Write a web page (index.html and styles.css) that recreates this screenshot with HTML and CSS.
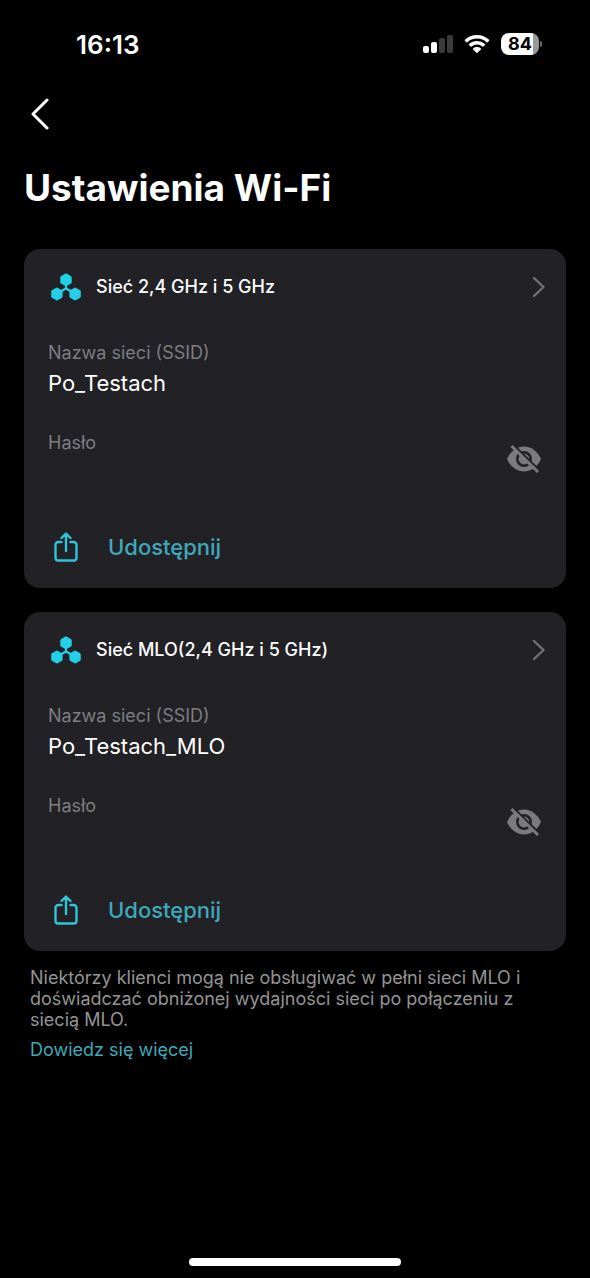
FILE: index.html
```html
<!DOCTYPE html>
<html lang="pl">
<head>
<meta charset="utf-8">
<meta name="viewport" content="width=device-width, initial-scale=1">
<title>Ustawienia Wi-Fi</title>
<link rel="stylesheet" href="styles.css">
</head>
<body>
<svg class="sprite" aria-hidden="true">
  <symbol id="mesh" viewBox="0 0 30 28">
    <path d="M15 7v9M15 15.500L6 20.500M15 15.500l9 5" fill="none" stroke="currentColor" stroke-width="2.200"/>
    <path d="M15 1.600l4.500 2.600v5.200L15 12l-4.500-2.600V4.200zM5.900 15.800l4.500 2.600v5.200l-4.500 2.600-4.500-2.600v-5.200zM24.100 15.800l4.500 2.600v5.200l-4.500 2.600-4.500-2.600v-5.200z" fill="currentColor" stroke="currentColor" stroke-width="2.400" stroke-linejoin="round"/>
  </symbol>
  <symbol id="chevron" viewBox="0 0 14 22">
    <path d="M2 2l9.500 9L2 20" fill="none" stroke="currentColor" stroke-width="2.400" stroke-linecap="round" stroke-linejoin="round"/>
  </symbol>
  <symbol id="eye-off" viewBox="0 0 36 30">
    <path d="M1 15C4 8 10.500 2.500 18 2.500S32 8 35 15c-3 7-9.500 12.500-17 12.500S4 22 1 15z" fill="currentColor"/>
    <circle cx="18" cy="15" r="6.700" fill="none" stroke="#222126" stroke-width="2.600"/>
    <path d="M7.500 1l27 26.500" stroke="#222126" stroke-width="2.400"/>
    <path d="M5.500 2l26.500 26" stroke="currentColor" stroke-width="3"/>
  </symbol>
  <symbol id="share" viewBox="0 0 24 30">
    <path d="M7.500 10H4.200a2.700 2.700 0 0 0-2.700 2.700v13.100a2.700 2.700 0 0 0 2.700 2.700h15.600a2.700 2.700 0 0 0 2.700-2.700V12.700a2.700 2.700 0 0 0-2.700-2.700h-3.300M12 19V2M7.500 6L12 1.500 16.500 6" fill="none" stroke="currentColor" stroke-width="2.400" stroke-linecap="round" stroke-linejoin="round"/>
  </symbol>
</svg>
<div class="screen">
  <div class="status">
    <time class="clock">16:13</time>
    <div class="indicators">
      <svg class="signal" viewBox="0 0 30 20" aria-label="Zasięg">
        <rect x="0" y="12" width="6" height="7" rx="2" fill="#fff"/>
        <rect x="8" y="8" width="6" height="11" rx="2" fill="#fff"/>
        <rect x="16" y="4" width="6" height="15" rx="2" fill="#3b3b3d"/>
        <rect x="24" y="1" width="6" height="18" rx="2" fill="#3b3b3d"/>
      </svg>
      <svg class="wifi" viewBox="0 0 26 20" aria-label="Wi-Fi">
        <path d="M13 1C8.300 1 4 2.800.9 5.700a.7.700 0 0 0 0 1l1.500 1.500a.7.700 0 0 0 1 0A14 14 0 0 1 13 4.500a14 14 0 0 1 9.600 3.700.7.700 0 0 0 1 0l1.500-1.500a.7.700 0 0 0 0-1A17.700 17.700 0 0 0 13 1z" fill="#fff"/>
        <path d="M13 7c-3 0-5.900 1.200-8 3.100a.7.700 0 0 0 0 1l1.600 1.500a.7.700 0 0 0 1 0A8 8 0 0 1 13 10.500a8 8 0 0 1 5.400 2.100.7.700 0 0 0 1 0l1.600-1.500a.7.700 0 0 0 0-1A12 12 0 0 0 13 7z" fill="#fff"/>
        <path d="M13 13c-1.500 0-2.800.5-3.900 1.400a.7.700 0 0 0 0 1l3.400 3.300a.7.700 0 0 0 1 0l3.400-3.300a.7.700 0 0 0 0-1A6 6 0 0 0 13 13z" fill="#fff"/>
      </svg>
      <div class="battery"><span class="level">84</span></div>
    </div>
  </div>
  <nav class="nav">
    <button class="back" type="button" aria-label="Wstecz">
      <svg viewBox="0 0 20 32"><path d="M17 2L3 16l14 14" fill="none" stroke="#fff" stroke-width="3" stroke-linecap="round" stroke-linejoin="round"/></svg>
    </button>
  </nav>
  <main class="content">
    <h1 class="title">Ustawienia Wi-Fi</h1>
    <section class="card">
      <button class="card-head" type="button">
        <svg class="mesh"><use href="#mesh"/></svg>
        <span class="card-name">Sieć 2,4 GHz i 5 GHz</span>
        <svg class="chevron"><use href="#chevron"/></svg>
      </button>
      <div class="field">
        <span class="label">Nazwa sieci (SSID)</span>
        <span class="value">Po_Testach</span>
      </div>
      <div class="secret">
        <span class="label">Hasło</span>
        <button class="reveal" type="button" aria-label="Pokaż hasło"><svg><use href="#eye-off"/></svg></button>
      </div>
      <button class="share" type="button"><svg><use href="#share"/></svg><span>Udostępnij</span></button>
    </section>
    <section class="card">
      <button class="card-head" type="button">
        <svg class="mesh"><use href="#mesh"/></svg>
        <span class="card-name">Sieć MLO(2,4 GHz i 5 GHz)</span>
        <svg class="chevron"><use href="#chevron"/></svg>
      </button>
      <div class="field">
        <span class="label">Nazwa sieci (SSID)</span>
        <span class="value">Po_Testach_MLO</span>
      </div>
      <div class="secret">
        <span class="label">Hasło</span>
        <button class="reveal" type="button" aria-label="Pokaż hasło"><svg><use href="#eye-off"/></svg></button>
      </div>
      <button class="share" type="button"><svg><use href="#share"/></svg><span>Udostępnij</span></button>
    </section>
    <div class="note">
      <p class="note-text">Niektórzy klienci mogą nie obsługiwać w pełni sieci MLO i doświadczać obniżonej wydajności sieci po połączeniu z siecią MLO.</p>
      <a class="more" href="#">Dowiedz się więcej</a>
    </div>
  </main>
  <div class="home-bar"></div>
</div>
</body>
</html>
```
FILE: styles.css
```css
* {
  box-sizing: border-box;
}

body {
  margin: 0;
  background: #000;
  color: #fff;
  font-family: Inter, "Liberation Sans", sans-serif;
}

button {
  padding: 0;
  border: 0;
  background: none;
  color: inherit;
  font: inherit;
  text-align: left;
  cursor: pointer;
}

svg {
  display: block;
  flex: none;
}

.sprite {
  position: absolute;
  width: 0;
  height: 0;
}

.screen {
  display: flex;
  flex-direction: column;
  min-height: 100vh;
}

.status {
  display: flex;
  align-items: center;
  justify-content: space-between;
  height: 88px;
  padding: 0 48px 0 76px;
}

.clock {
  font-size: 26px;
  font-weight: 600;
}

.indicators {
  display: flex;
  align-items: center;
  gap: 11px;
}

.signal {
  width: 30px;
  height: 20px;
}

.wifi {
  width: 26px;
  height: 20px;
}

.battery {
  display: flex;
  align-items: center;
  gap: 1px;
}

.battery::after {
  content: "";
  width: 2px;
  height: 6px;
  border-radius: 0 4px 4px 0;
  background: #6d6d70;
}

.level {
  width: 38px;
  border-radius: 8px;
  background: linear-gradient(to right, #fff 84%, #98989b 84%);
  color: #000;
  font-size: 18px;
  font-weight: 700;
  line-height: 22px;
  text-align: center;
}

.nav {
  padding: 0 24px;
}

.back {
  display: flex;
  align-items: center;
  width: 48px;
  height: 52px;
  padding-left: 6px;
}

.back svg {
  width: 20px;
  height: 32px;
}

.content {
  display: flex;
  flex-direction: column;
  gap: 24px;
  padding: 24px;
}

.title {
  margin: 0 0 13px;
  font-size: 37px;
  font-weight: 700;
  line-height: 48px;
}

.card {
  display: flex;
  flex-direction: column;
  padding: 0 24px 20px;
  border-radius: 16px;
  background: #222126;
}

.card-head {
  display: flex;
  align-items: center;
  gap: 15px;
  height: 75px;
  padding: 0 20px 0 3px;
  margin-right: -24px;
}

.mesh {
  width: 30px;
  height: 28px;
  color: #22d0e8;
}

.card-name {
  flex: 1;
  font-size: 18px;
  font-weight: 500;
}

.chevron {
  width: 14px;
  height: 22px;
  color: #727276;
}

.field {
  display: flex;
  flex-direction: column;
  gap: 3px;
  padding-top: 17px;
}

.label {
  color: #7d7d82;
  font-size: 18px;
  line-height: 24px;
}

.value {
  font-size: 22px;
  line-height: 30px;
}

.secret {
  display: flex;
  justify-content: space-between;
  margin-top: 33px;
}

.reveal {
  padding-top: 13px;
  color: #7b7b7f;
}

.reveal svg {
  width: 36px;
  height: 30px;
}

.share {
  display: flex;
  align-items: center;
  gap: 30px;
  margin-top: 52px;
  padding-left: 6px;
  color: #3fa9ba;
  font-size: 22px;
  font-weight: 500;
  line-height: 42px;
}

.share svg {
  width: 24px;
  height: 30px;
  color: #2fc5d8;
}

.note {
  padding: 0 6px;
  margin-top: -8px;
  font-size: 18px;
}

.note-text {
  margin: 0 0 8px;
  color: #949494;
  line-height: 21px;
}

.more {
  color: #3fa9ba;
  line-height: 24px;
  text-decoration: none;
}

.home-bar {
  width: 36%;
  height: 8px;
  margin: auto auto 12px;
  border-radius: 4px;
  background: #fff;
}
```
